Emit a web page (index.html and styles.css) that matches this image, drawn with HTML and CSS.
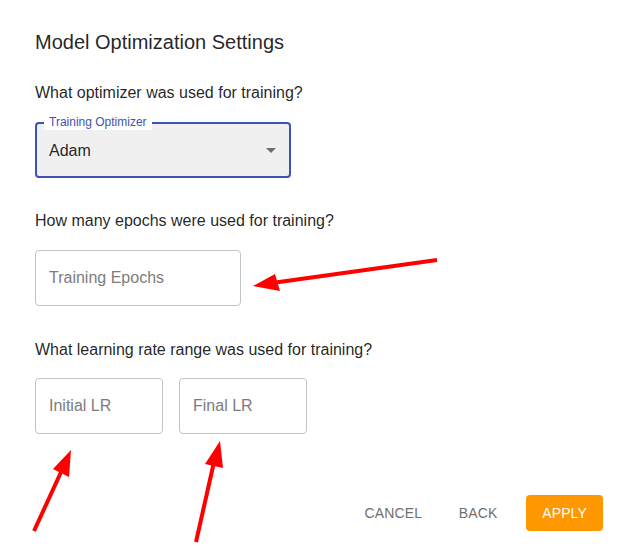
FILE: index.html
```html
<!DOCTYPE html>
<html>
<head>
<meta charset="utf-8">
<link rel="stylesheet" href="styles.css">
</head>
<body>
<div class="dialog">
  <h2 class="title">Model Optimization Settings</h2>
  <p class="question q1">What optimizer was used for training?</p>
  <div class="select">
    <span class="select-label">Training Optimizer</span>
    <span class="select-value">Adam</span>
    <svg class="caret" width="24" height="24" viewBox="0 0 24 24"><path d="M7 10l5 5 5-5z" fill="rgba(0,0,0,0.54)"/></svg>
  </div>
  <p class="question q2">How many epochs were used for training?</p>
  <div class="field epochs">Training Epochs</div>
  <p class="question q3">What learning rate range was used for training?</p>
  <div class="lr-row">
    <div class="field lr">Initial LR</div>
    <div class="field lr">Final LR</div>
  </div>
  <div class="actions">
    <button class="btn text">Cancel</button>
    <button class="btn text">Back</button>
    <button class="btn apply">Apply</button>
  </div>
</div>
<svg class="annotations" width="624" height="554" viewBox="0 0 624 554">
  <line x1="437" y1="260" x2="272" y2="283" stroke="#ff0000" stroke-width="4"/>
  <polygon points="253,286 275,274 280,291" fill="#ff0000"/>
  <line x1="34" y1="531" x2="62" y2="470" stroke="#ff0000" stroke-width="4"/>
  <polygon points="71,450 53,469 69,477" fill="#ff0000"/>
  <line x1="196" y1="542" x2="214" y2="462" stroke="#ff0000" stroke-width="4"/>
  <polygon points="220,441 205,464 223,468" fill="#ff0000"/>
</svg>
</body>
</html>
```

FILE: styles.css
```css
html, body {
  margin: 0;
  padding: 0;
  background: #ffffff;
}
body {
  font-family: "Liberation Sans", Arial, sans-serif;
  color: rgba(0, 0, 0, 0.87);
  width: 624px;
  height: 554px;
  position: relative;
  overflow: hidden;
}
.dialog {
  padding: 26px 21px 0 35px;
  display: flex;
  flex-direction: column;
  align-items: flex-start;
}
.title {
  margin: 0;
  font-size: 20px;
  font-weight: 400;
  line-height: 32px;
}
.question {
  margin: 0;
  font-size: 16px;
  line-height: 24px;
}
.q1 { margin-top: 23px; }
.q2 { margin-top: 31px; }
.q3 { margin-top: 32px; }
.select {
  position: relative;
  margin-top: 17px;
  width: 256px;
  height: 56px;
  box-sizing: border-box;
  border: 2px solid #3f51b5;
  border-radius: 4px;
  background: #f0f0f0;
  display: flex;
  align-items: center;
  padding: 2px 0 0 12px;
}
.select-label {
  position: absolute;
  left: 7px;
  top: -10px;
  padding: 0 5px;
  background: #ffffff;
  font-size: 12px;
  line-height: 16px;
  color: #3f51b5;
}
.select-value {
  font-size: 16px;
  line-height: 24px;
}
.caret {
  position: absolute;
  right: 6px;
  top: 14px;
}
.field {
  box-sizing: border-box;
  height: 56px;
  border: 1px solid #c4c4c4;
  border-radius: 4px;
  display: flex;
  align-items: center;
  padding-left: 13px;
  font-size: 16px;
  color: #7c7c7c;
}
.epochs {
  margin-top: 17px;
  width: 206px;
}
.lr-row {
  margin-top: 16px;
  display: flex;
  gap: 16px;
}
.lr {
  width: 128px;
}
.actions {
  align-self: stretch;
  margin-top: 61px;
  display: flex;
  justify-content: flex-end;
  gap: 16px;
}
.btn {
  font-family: "Liberation Sans", Arial, sans-serif;
  font-size: 14px;
  font-weight: 400;
  text-transform: uppercase;
  letter-spacing: 0.01em;
  line-height: 24px;
  min-width: 64px;
  height: 36px;
  border: none;
  border-radius: 4px;
  cursor: pointer;
}
.btn.text {
  background: transparent;
  color: #6f6f6f;
  padding: 6px 8px;
}
.btn.apply {
  background: #ff9800;
  color: #ffffff;
  padding: 6px 16px;
}
.annotations {
  position: absolute;
  left: 0;
  top: 0;
  pointer-events: none;
}
```
